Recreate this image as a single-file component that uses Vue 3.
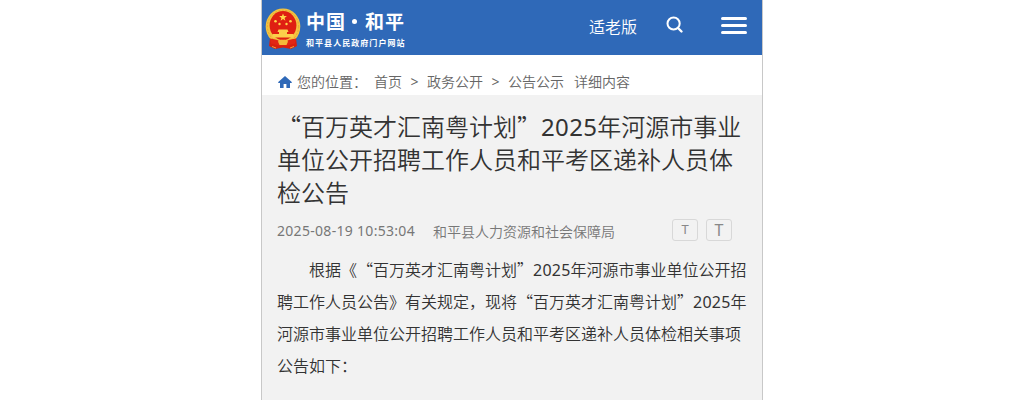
<template>
  <div class="page">
    <header class="header">
      <a class="logo" href="#">
        <svg class="emblem" viewBox="0 0 36 42">
          <path d="M5 30 L4 38 L10 41 L18 39.500 L26 41 L32 38 L31 30 Z" fill="#d8200f" />
          <ellipse cx="18" cy="18.5" rx="17.3" ry="18" fill="#f3c340" />
          <ellipse cx="18" cy="18.5" rx="15.6" ry="16.300" fill="none" stroke="#e3a02e" stroke-width=".8" stroke-dasharray="2 1.5" />
          <ellipse cx="18" cy="17.5" rx="13.4" ry="14.4" fill="#df1f12" />
          <path d="M18 5.4l1 2.7h2.9l-2.3 1.8.8 2.8-2.4-1.7-2.4 1.7.8-2.8-2.3-1.8H17z" fill="#ffd84a" />
          <circle cx="10.5" cy="13.2" r="1.3" fill="#ffd84a" />
          <circle cx="14.5" cy="16" r="1.2" fill="#ffd84a" />
          <circle cx="21.5" cy="16" r="1.2" fill="#ffd84a" />
          <circle cx="25.5" cy="13.2" r="1.3" fill="#ffd84a" />
          <path d="M13.5 21.500h9l1 2.5h-1.5v2h6.500v3.500h-21v-3.500h6.500v-2h-1.500z" fill="#fbd04a" />
          <path d="M5 30.500c4 1 7 1 9 2.500h8c2-1.500 5-1.500 9-2.500l-1 5-8 2h-8l-8-2z" fill="#e12615" />
          <path d="M13 33.500c2-2.500 8-2.500 10 0l-1.500 3.500h-7z" fill="#f3b93a" />
          <path d="M7 38.500l4 1.500M29 38.500l-4 1.500" stroke="#f3c340" stroke-width=".8" fill="none" />
        </svg>
        <div class="logo-text">
          <div class="logo-title"><span>中国</span><i class="dot"></i><span>和平</span></div>
          <div class="logo-sub">和平县人民政府门户网站</div>
        </div>
      </a>
      <div class="tools">
        <a class="elder" href="#">适老版</a>
        <svg class="search" viewBox="0 0 18 18">
          <circle cx="7.600" cy="7.500" r="6.100" fill="none" stroke="#fff" stroke-width="2" />
          <path d="M12 12l3.500 3.500" stroke="#fff" stroke-width="2.400" stroke-linecap="round" />
        </svg>
        <div class="menu"><i></i><i></i><i></i></div>
      </div>
    </header>

    <nav class="crumbs">
      <svg class="home" viewBox="0 0 14 12">
        <path d="M7 0L0 6.300l.6.700H2v5h3.600V8h2.800v4H12V7h1.400l.6-.7z" fill="#2f69b8" />
      </svg>
      <span class="label">您的位置：</span>
      <template v-for="(item, index) in crumbs" :key="item">
        <b v-if="index > 0" class="sep">&gt;</b>
        <a href="#">{{ item }}</a>
      </template>
      <span class="current">详细内容</span>
    </nav>

    <main class="article">
      <h1 class="title">
        <span class="line">“百万英才汇南粤计划”<span class="num">2025</span>年河源市事业</span>
        <span class="line">单位公开招聘工作人员和平考区递补人员体</span>
        <span class="line">检公告</span>
      </h1>
      <div class="meta">
        <span class="date">2025-08-19 10:53:04</span>
        <span class="source">和平县人力资源和社会保障局</span>
        <div class="sizes">
          <button class="size small">T</button>
          <button class="size big">T</button>
        </div>
      </div>
      <p class="content">
        <span class="line indent">根据《“百万英才汇南粤计划”<span class="num">2025</span>年河源市事业单位公开招</span>
        <span class="line">聘工作人员公告》有关规定，现将“百万英才汇南粤计划”<span class="num">2025</span>年</span>
        <span class="line">河源市事业单位公开招聘工作人员和平考区递补人员体检相关事项</span>
        <span class="line">公告如下：</span>
      </p>
    </main>
  </div>
</template>

<script setup>
const crumbs = ['首页', '政务公开', '公告公示'];
</script>

<style>
body {
  background: #fff;
}
</style>

<style scoped>
.page {
  box-sizing: border-box;
  width: 502px;
  height: 400px;
  margin-left: 261px;
  border-left: 1px solid #c8c8c8;
  border-right: 1px solid #c8c8c8;
  display: flex;
  flex-direction: column;
  overflow: hidden;
  font-family: "Noto Sans CJK SC", sans-serif;
  font-weight: 350;
  text-spacing-trim: space-all;
  color: #333;
}

a {
  color: inherit;
  text-decoration: none;
}

.header {
  flex: none;
  height: 55px;
  background: #2f69b8;
  color: #fff;
  display: flex;
  justify-content: space-between;
}

.logo {
  display: flex;
  padding: 8px 0 0 3px;
}

.emblem {
  width: 36px;
  height: 42px;
}

.logo-text {
  margin-left: 5px;
}

.logo-title {
  display: flex;
  align-items: center;
  height: 24px;
  font-size: 19px;
  font-weight: 700;
  letter-spacing: 1px;
}

.dot {
  width: 5px;
  height: 5px;
  margin: 2px 8px 0 6px;
  border-radius: 50%;
  background: #fff;
}

.logo-sub {
  margin-top: 5px;
  font-size: 8px;
  line-height: 12px;
  font-weight: 700;
  letter-spacing: 1.05px;
  white-space: nowrap;
}

.tools {
  display: flex;
  align-items: flex-start;
  padding-right: 15px;
}

.elder {
  margin-top: 14px;
  font-size: 16px;
  line-height: 24px;
}

.search {
  width: 18px;
  height: 18px;
  margin: 16px 0 0 29px;
}

.menu {
  width: 26px;
  margin: 17px 0 0 37px;
  display: flex;
  flex-direction: column;
  gap: 4px;
}

.menu i {
  height: 3px;
  border-radius: 2px;
  background: #fff;
}

.crumbs {
  flex: none;
  box-sizing: border-box;
  height: 40px;
  padding: 11px 0 0 16px;
  display: flex;
  align-items: center;
  font-size: 14px;
  line-height: 26px;
  color: #666;
  white-space: nowrap;
}

.home {
  width: 14px;
  height: 12px;
  margin: 3px 5px 0 0;
}

.label {
  margin-right: 7px;
}

.sep {
  width: 25px;
  padding-top: 2px;
  text-align: center;
  font-family: "Noto Sans", sans-serif;
  font-weight: 400;
}

.current {
  margin-left: 10px;
}

.article {
  flex: 1;
  padding: 14px 15px 0;
  background: #f2f2f2;
}

.line {
  display: block;
  white-space: nowrap;
}

.num {
  font-family: "Noto Sans", sans-serif;
  font-weight: 400;
  line-height: 0;
  letter-spacing: 0.014em;
}

.title {
  margin: 0;
  font-size: 24px;
  line-height: 33px;
  font-weight: 350;
}

.meta {
  display: flex;
  height: 45px;
  font-size: 14px;
  line-height: 46px;
  color: #777;
}

.date {
  width: 156px;
  font-family: "Noto Sans", sans-serif;
  font-weight: 400;
  letter-spacing: 0.3px;
}

.sizes {
  margin: 11px 15px 0 auto;
  display: flex;
  gap: 8px;
}

.size {
  box-sizing: border-box;
  width: 26px;
  height: 22px;
  padding: 0 0 2px;
  border: 1px solid #d8d8d8;
  border-radius: 3px;
  background: transparent;
  font-family: "Noto Sans", sans-serif;
  line-height: 18px;
  color: #888;
}

.small {
  font-size: 13px;
}

.big {
  padding: 0;
  font-size: 16px;
}

.content {
  margin: 0;
  font-size: 16px;
  line-height: 32px;
}

.indent {
  padding-left: 32px;
}
</style>
